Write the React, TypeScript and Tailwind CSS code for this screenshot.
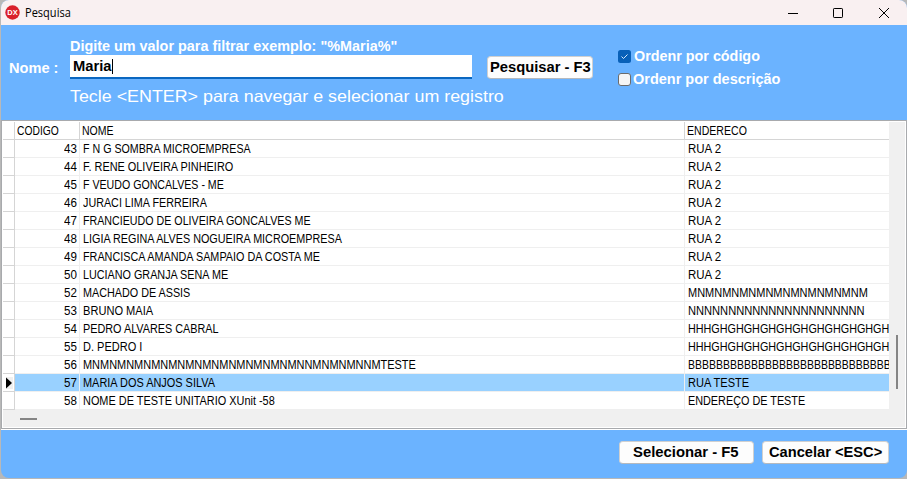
import { useLayoutEffect, useRef } from "react";

function Fit({ w, children, className = "" }: { w: number; children: string; className?: string }) {
  const ref = useRef<HTMLSpanElement>(null);
  useLayoutEffect(() => {
    const el = ref.current;
    if (el) el.style.transform = `scaleX(${w / el.offsetWidth})`;
  }, [w]);
  return (
    <span className="block shrink-0 text-left" style={{ width: w }}>
      <span ref={ref} className={`inline-block origin-left whitespace-pre ${className}`}>{children}</span>
    </span>
  );
}

type Row = [number, string, number, string, number];
const rows: Row[] = [
  [43, "F N G SOMBRA MICROEMPRESA", 168, "RUA 2", 33],
  [44, "F. RENE OLIVEIRA PINHEIRO", 150, "RUA 2", 33],
  [45, "F VEUDO GONCALVES - ME", 141, "RUA 2", 33],
  [46, "JURACI LIMA FERREIRA", 124, "RUA 2", 33],
  [47, "FRANCIEUDO DE OLIVEIRA GONCALVES ME", 228, "RUA 2", 33],
  [48, "LIGIA REGINA ALVES NOGUEIRA MICROEMPRESA", 259, "RUA 2", 33],
  [49, "FRANCISCA AMANDA SAMPAIO DA COSTA ME", 237, "RUA 2", 33],
  [50, "LUCIANO GRANJA SENA ME", 145, "RUA 2", 33],
  [52, "MACHADO DE ASSIS", 107, "MNMNMNMNMNMNMNMNMNMNM", 180],
  [53, "BRUNO MAIA", 70, "NNNNNNNNNNNNNNNNNNNNNN", 177],
  [54, "PEDRO ALVARES CABRAL", 136, "HHHGHGHGHGHGHGHGHGHGHGHGH", 201],
  [55, "D. PEDRO I", 59, "HHHGHGHGHGHGHGHGHGHGHGHGH", 201],
  [56, "MNMNMNMNMNMNMNMNMNMNMNMNMNNMNMNMNNMTESTE", 333, "BBBBBBBBBBBBBBBBBBBBBBBBBBBBB", 203],
  [57, "MARIA DOS ANJOS SILVA", 132, "RUA TESTE", 61],
  [58, "NOME DE TESTE UNITARIO XUnit -58", 192, "ENDEREÇO DE TESTE", 117],
];

function Button({ children, tw, className }: { children: string; tw: number; className: string }) {
  return (
    <button className={`flex h-[23px] items-center justify-center rounded-[4px] border border-[#d0d0d0] border-b-[#b5b9be] bg-[#fdfdfd] text-[14px] font-bold text-black ${className}`}>
      <Fit w={tw}>{children}</Fit>
    </button>
  );
}

export default function App() {
  return (
    <div className="h-[479px] w-[907px] overflow-hidden bg-[#b8b8b8] pl-px font-['Liberation_Sans',Arial,sans-serif] text-black">
      <div className="flex h-[478px] w-[906px] flex-col overflow-hidden rounded-[8px] bg-[#6bb3ff]">
        <header className="flex h-[25px] shrink-0 items-center bg-[#f9f0f1] pl-[4px]">
          <svg width="15" height="15" viewBox="0 0 15 15">
            <circle cx="7.5" cy="7.5" r="7.2" fill="#d9202b" />
            <text x="7.5" y="10" textAnchor="middle" fontSize="7.5" fontWeight="bold" fill="white" fontFamily="Liberation Sans">DX</text>
          </svg>
          <div className="ml-[5px] font-['Open_Sans',sans-serif] text-[12px] leading-4">
            <Fit w={46}>Pesquisa</Fit>
          </div>
          <svg className="ml-auto mr-[16px]" width="104" height="12" viewBox="0 0 104 12" fill="none" stroke="black">
            <path d="M1 6.5H11" />
            <rect x="46.5" y="1.5" width="9" height="9" rx="0.7" />
            <path d="M92 1L102 11M102 1L92 11" />
          </svg>
        </header>

        <section className="flex h-[95px] shrink-0 text-white">
          <div className="w-[69px] pl-[8px] pt-[35px] text-[14px] font-bold leading-4">
            <Fit w={49}>Nome :</Fit>
          </div>
          <div className="w-[402px] pt-[13px]">
            <div className="text-[14px] font-bold leading-4"><Fit w={327}>{'Digite um valor para filtrar exemplo: "%Maria%"'}</Fit></div>
            <div className="mt-px flex h-[24px] items-center border-b-2 border-[#0a67c0] bg-white pl-[3px] text-[14px] font-bold text-black">
              <Fit w={39}>Maria</Fit>
              <span className="h-[15px] w-px bg-black" />
            </div>
            <div className="mt-[7px] text-[16.5px] leading-5"><Fit w={434}>{"Tecle <ENTER> para navegar e selecionar um registro"}</Fit></div>
          </div>
          <div className="w-[146px] pl-[15px] pt-[31px]">
            <Button tw={101} className="w-[106px]">Pesquisar - F3</Button>
          </div>
          <div className="pt-[23px] text-[14px] font-bold leading-4">
            <div className="flex h-[16px] items-center">
              <svg width="13" height="13" viewBox="0 0 13 13">
                <rect width="13" height="13" rx="2.5" fill="#0860b8" />
                <path d="M3.5 6.5L5.5 8.5L9.5 4.5" fill="none" stroke="#d4e8fb" />
              </svg>
              <span className="w-[3px]" />
              <Fit w={126}>Ordenr por código</Fit>
            </div>
            <div className="mt-[7px] flex h-[16px] items-center">
              <span className="mr-[2px] h-[13px] w-[13px] rounded-[3px] border border-[#6b6b6b] bg-[#f5f5f5]" />
              <Fit w={147}>Ordenr por descrição</Fit>
            </div>
          </div>
        </section>

        <main className="mr-[0.5px] flex h-[309px] shrink-0 flex-col border border-[#a8aaad] bg-white pl-px pt-px">
          <div className="flex h-[288px] shrink-0 justify-between">
            <div className="w-[886px] text-[12.5px] leading-[18px]">
              <div className="flex h-[18px] border-b border-[#d5d5d5]">
                <div className="w-[12px] border-r border-[#d5d5d5]" />
                <div className="w-[65px] border-r border-[#d5d5d5] pl-[2px]"><Fit w={42}>CODIGO</Fit></div>
                <div className="w-[605px] border-r border-[#d5d5d5] pl-[2px]"><Fit w={32}>NOME</Fit></div>
                <div className="pl-[2px]"><Fit w={60}>ENDERECO</Fit></div>
              </div>
              {rows.map(([id, name, nw, address, aw]) => (
                <div key={id} className="flex h-[18px]">
                  <div className="flex w-[12px] items-center border-b border-r border-[#d5d5d5]">
                    {id === 57 && (
                      <svg width="10" height="12" viewBox="0 0 10 12">
                        <rect x="3" width="7" height="12" fill="#f0f0f0" />
                        <path d="M3 0.5V11.5L9 6Z" />
                      </svg>
                    )}
                  </div>
                  <div className={`flex w-[874px] border-b border-[#efefef] leading-[19px] ${id === 57 ? "bg-[#99d1ff]" : ""}`}>
                    <div className="flex w-[65px] shrink-0 justify-end border-r border-[#efefef] pr-[2px]"><Fit w={13}>{String(id)}</Fit></div>
                    <div className="w-[605px] shrink-0 border-r border-[#efefef] pl-[3px]"><Fit w={nw}>{name}</Fit></div>
                    <div className="w-[204px] shrink-0 overflow-hidden pl-[3px]"><Fit w={aw}>{address}</Fit></div>
                  </div>
                </div>
              ))}
            </div>
            <div className="mr-px flex w-[16px] justify-center bg-[#f0f0f0] pt-[213px]">
              <div className="h-[54px] w-[2px] bg-[#858585]" />
            </div>
          </div>
          <div className="mr-px h-[17px] shrink-0 bg-[#f0f0f0] pl-[17px] pt-[8px]">
            <div className="h-[2px] w-[17px] bg-[#858585]" />
          </div>
        </main>

        <footer className="flex flex-1 justify-end gap-[8px] border-t border-white pr-[18px] pt-[11px]">
          <Button tw={106} className="w-[135px] pr-[2px]">Selecionar - F5</Button>
          <Button tw={113} className="w-[127px]">{"Cancelar <ESC>"}</Button>
        </footer>
      </div>
    </div>
  );
}
